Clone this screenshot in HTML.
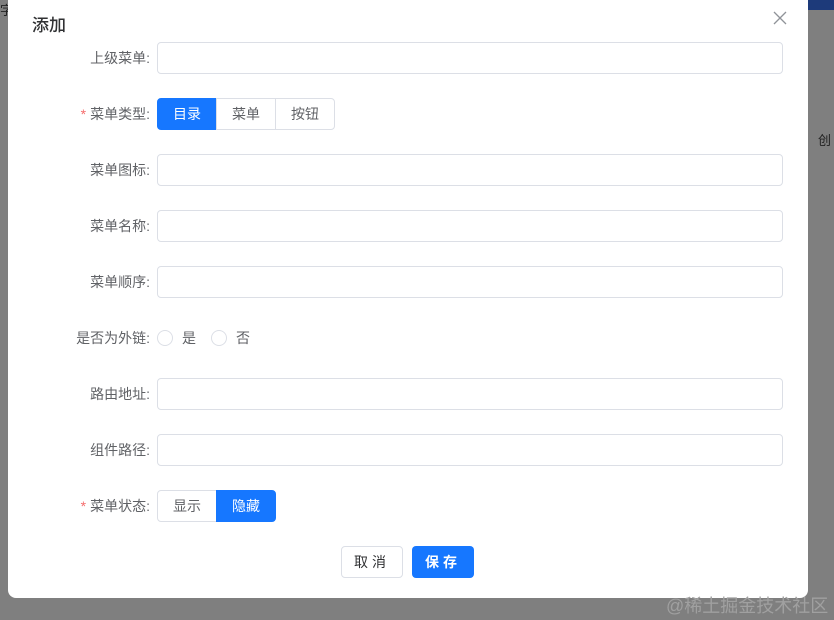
<!DOCTYPE html><html><head><meta charset="utf-8"><style>
body{margin:0;width:834px;height:620px;background:#7f7f7f;position:relative;overflow:hidden;font-family:"Liberation Sans","Noto Sans CJK SC",sans-serif;font-size:14px;color:#606266}
.m{position:absolute;left:8px;top:0;width:800px;height:598px;background:#fff;border-radius:0 0 8px 8px}
.t{position:absolute;left:32px;top:11px;font-size:17px;color:#303133;font-weight:500}
.x{position:absolute;left:773px;top:11px}
.r{position:absolute;left:0;width:834px;height:32px}
.l{position:absolute;right:684px;top:0;line-height:32px;white-space:nowrap}
.l b{color:#f56c6c;font-weight:normal;margin-right:4px}
.i{position:absolute;left:157px;top:0;width:624px;height:30px;border:1px solid #dcdfe6;border-radius:4px}
.g{position:absolute;left:157px;top:0;display:flex}
.g span{height:30px;line-height:30px;border:1px solid #dcdfe6;padding:0 15px;color:#606266;margin-left:-1px}
.g span:first-child{border-radius:4px 0 0 4px;margin-left:0}
.g span:last-child{border-radius:0 4px 4px 0}
.g span.a{background:#1677ff;border-color:#1677ff;color:#fff}
.rd{position:absolute;top:0;line-height:32px;display:flex;align-items:center}
.rd i{width:14px;height:14px;border:1px solid #dcdfe6;border-radius:50%;margin-right:9px;display:inline-block}
.btn{position:absolute;top:546px;height:30px;line-height:30px;width:60px;text-align:center;border-radius:4px;letter-spacing:4px}
</style></head><body>
<div style="position:absolute;left:0;top:0;font-size:13px;color:#222">字</div>
<div style="position:absolute;left:808px;top:0;width:26px;height:10px;background:#1d3a7a"></div>
<div style="position:absolute;left:818px;top:130px;font-size:13px;color:#222">创</div>
<div class="m"></div>
<div class="t">添加</div>
<svg class="x" width="14" height="14" viewBox="0 0 14 14"><path d="M1 1L13 13M13 1L1 13" stroke="#909399" stroke-width="1.3"/></svg>
<div class="r" style="top:42px"><div class="l">上级菜单:</div><div class="i"></div></div>
<div class="r" style="top:98px"><div class="l"><b>*</b>菜单类型:</div><div class="g"><span class="a">目录</span><span>菜单</span><span>按钮</span></div></div>
<div class="r" style="top:154px"><div class="l">菜单图标:</div><div class="i"></div></div>
<div class="r" style="top:210px"><div class="l">菜单名称:</div><div class="i"></div></div>
<div class="r" style="top:266px"><div class="l">菜单顺序:</div><div class="i"></div></div>
<div class="r" style="top:322px"><div class="l">是否为外链:</div><div class="rd" style="left:157px"><i></i>是</div><div class="rd" style="left:211px"><i></i>否</div></div>
<div class="r" style="top:378px"><div class="l">路由地址:</div><div class="i"></div></div>
<div class="r" style="top:434px"><div class="l">组件路径:</div><div class="i"></div></div>
<div class="r" style="top:490px"><div class="l"><b>*</b>菜单状态:</div><div class="g"><span>显示</span><span class="a">隐藏</span></div></div>
<div class="btn" style="left:341px;border:1px solid #dcdfe6;color:#303133">取消</div>
<div class="btn" style="left:412px;width:62px;height:32px;line-height:32px;background:#1677ff;color:#fff;font-weight:bold">保存</div>
<div style="position:absolute;left:666px;top:592px;font-size:18px;color:#a0a0a0">@稀土掘金技术社区</div>
</body></html>
